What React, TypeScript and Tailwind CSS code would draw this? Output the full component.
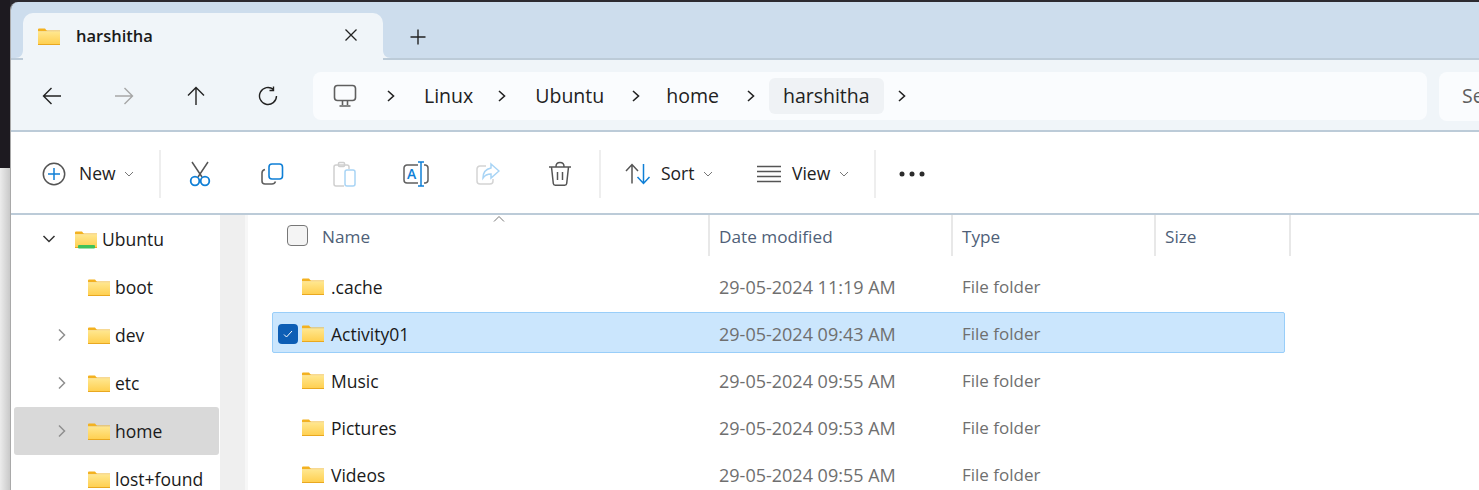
import React from "react";

const FONT = "font-['Open_Sans','Noto_Sans',sans-serif]";

const Folder = ({ drive = false }: { drive?: boolean }) => (
    <svg width="24" height="19" viewBox="0 0 24 19" className="shrink-0">
        <defs>
            <linearGradient id="folderBody" x1="0" y1="0" x2="0" y2="1">
                <stop offset="0" stopColor="#ffe78f" />
                <stop offset="1" stopColor="#ffcf4f" />
            </linearGradient>
        </defs>
        <path d="M1 2.500a1 1 0 0 1 1-1h6l2 2.500h-9z" fill="#f4b11f" />
        <rect x="1" y="3.500" width="22" height="1" fill="#f0b429" />
        <rect x="1" y="4.500" width="22" height="13" fill="url(#folderBody)" />
        <rect x="1" y="17" width="22" height="1" fill="#e9a820" />
        {drive && <rect x="4" y="15" width="17" height="3.500" rx="1" fill="#3fc25a" />}
    </svg>
);

const Chevron = ({ open = false }: { open?: boolean }) => (
    <svg width="16" height="16" viewBox="0 0 16 16" fill="none" stroke={open ? "#333" : "#8f8f8f"} strokeWidth="1.5">
        {open ? <path d="M2.500 5l5.500 5.500L13.500 5" /> : <path d="M5 2.500l5.500 5.500L5 13.500" />}
    </svg>
);

const Crumb = () => (
    <svg width="12" height="14" viewBox="0 0 12 14" fill="none" stroke="#222" strokeWidth="1.6" className="shrink-0">
        <path d="M3 2l5.500 5L3 12" />
    </svg>
);

const Caret = () => (
    <svg width="10" height="6" viewBox="0 0 10 6" fill="none" stroke="#777" strokeWidth="1">
        <path d="M1 1l4 4 4-4" />
    </svg>
);

const Sep = () => <div className="w-[2px] h-[48px] bg-[#eeeeee] shrink-0" />;

const ArrowIcon = ({ d, stroke = "#222" }: { d: string; stroke?: string }) => (
    <svg width="20" height="20" viewBox="0 0 20 20" fill="none" stroke={stroke} strokeWidth="1.4">
        <path d={d} />
    </svg>
);

const CutIcon = () => (
    <svg width="24" height="26" viewBox="0 0 24 26" fill="none" strokeWidth="1.5">
        <path d="M4 1l10 15M20 1L10 16" stroke="#555" />
        <circle cx="7" cy="20" r="4.300" stroke="#0f7fd6" strokeWidth="1.8" />
        <circle cx="17" cy="20" r="4.300" stroke="#0f7fd6" strokeWidth="1.8" />
    </svg>
);

const CopyIcon = () => (
    <svg width="24" height="24" viewBox="0 0 24 24" fill="none" strokeWidth="1.6">
        <path d="M5 7.500C3 8 2 9 2 11v8c0 2 1.500 3 3 3h7c2 0 3-1 3.500-2.500" stroke="#5f5f5f" />
        <rect x="9" y="2" width="13.500" height="15" rx="3" stroke="#0f7fd6" />
    </svg>
);

const PasteIcon = () => (
    <svg width="24" height="26" viewBox="0 0 24 26" fill="none" strokeWidth="1.5">
        <path d="M12 25H4a2 2 0 0 1-2-2V6a2 2 0 0 1 2-2h11a2 2 0 0 1 2 2v2" stroke="#cfcfcf" />
        <rect x="6.500" y="1.500" width="6" height="4" rx="1" stroke="#cfcfcf" />
        <rect x="13" y="9" width="10" height="16" rx="2" stroke="#a8d4f5" />
    </svg>
);

const RenameIcon = () => (
    <svg width="26" height="26" viewBox="0 0 26 26" fill="none" strokeWidth="1.5">
        <path d="M15 4H4a3 3 0 0 0-3 3v12a3 3 0 0 0 3 3h11M21 4h1.500a3 3 0 0 1 2.500 3v12a3 3 0 0 1-2.500 3H21" stroke="#5f5f5f" />
        <path d="M18 1v24M15 1h6M15 25h6" stroke="#0f7fd6" />
        <text x="4" y="18" fontSize="14" fontFamily="Open Sans, sans-serif" fill="#0f7fd6" stroke="none" fontWeight="600">A</text>
    </svg>
);

const ShareIcon = () => (
    <svg width="24" height="24" viewBox="0 0 24 24" fill="none" strokeWidth="1.5">
        <path d="M10 4H4a3 3 0 0 0-3 3v12a3 3 0 0 0 3 3h10a3 3 0 0 0 3-3v-2" stroke="#d4d4d4" />
        <path d="M15 2l8 7-8 7v-4c-4 0-6 1-8 4 0-6 3-9 8-10z" stroke="#a8d4f5" />
    </svg>
);

const TrashIcon = () => (
    <svg width="24" height="26" viewBox="0 0 24 26" fill="none" stroke="#555" strokeWidth="1.5">
        <path d="M1 6h22M8 5.500C8 3 9.500 1.500 12 1.500S16 3 16 5.500M3.500 6l1.800 16.500a2 2 0 0 0 2 1.800h9.400a2 2 0 0 0 2-1.800L20.500 6M9.500 11v8M14.500 11v8" />
    </svg>
);

const SortIcon = () => (
    <svg width="26" height="22" viewBox="0 0 26 22" fill="none" strokeWidth="1.5">
        <path d="M7 20.500V1.500M1 8l6-6.500L13 8" stroke="#555" />
        <path d="M18.500 1v19M12.500 14l6 6.500 6-6.500" stroke="#0f7fd6" />
    </svg>
);

const ViewIcon = () => (
    <svg width="24" height="18" viewBox="0 0 24 18" fill="none" stroke="#555" strokeWidth="1.3">
        <path d="M0 1.500h24M0 6.500h24M0 11.500h24M0 16.500h24" />
    </svg>
);

const tools = [CutIcon, CopyIcon, PasteIcon, RenameIcon, ShareIcon, TrashIcon];

const tree = [
    { name: "Ubuntu", indent: "pl-[27px]", chev: "open", drive: true },
    { name: "boot", indent: "pl-[73px]", chev: "" },
    { name: "dev", indent: "pl-[73px]", chev: "closed" },
    { name: "etc", indent: "pl-[73px]", chev: "closed" },
    { name: "home", indent: "pl-[73px]", chev: "closed", selected: true },
    { name: "lost+found", indent: "pl-[73px]", chev: "" },
];

const files = [
    { name: ".cache", date: "29-05-2024 11:19 AM" },
    { name: "Activity01", date: "29-05-2024 09:43 AM", selected: true },
    { name: "Music", date: "29-05-2024 09:55 AM" },
    { name: "Pictures", date: "29-05-2024 09:53 AM" },
    { name: "Videos", date: "29-05-2024 09:55 AM" },
];

export default function App() {
    return (
        <div className={`w-[1479px] h-[490px] overflow-hidden flex bg-[#2c2a30] ${FONT}`}>
            {/* desktop peeking out on the left */}
            <div className="w-[10px] shrink-0 flex flex-col">
                <div className="h-[168px] bg-[#1d1a20]" />
                <div className="flex-1 bg-gradient-to-r from-[#ececec] to-[#c9c9c9]" />
            </div>
            <div className="flex-1 min-w-0 mt-[2px] flex flex-col rounded-tl-lg overflow-hidden border-l border-[#a9a9a9]">
                {/* tab strip */}
                <div className="h-[58px] bg-[#cddded] border-b-2 border-[#bccbd8] flex items-end pl-[12px] shrink-0">
                    <div className="relative w-[360px] h-[47px] -mb-[2px] bg-[#f0f5f9] rounded-t-[10px] flex items-center pl-[14px] pr-[26px]">
                        <svg width="8" height="8" viewBox="0 0 8 8" fill="#f0f5f9" className="absolute -left-[8px] bottom-[2px]">
                            <path d="M8 0v8H0c5 0 8-3 8-8z" />
                        </svg>
                        <svg width="8" height="8" viewBox="0 0 8 8" fill="#f0f5f9" className="absolute -right-[8px] bottom-[2px]">
                            <path d="M0 0v8h8C3 8 0 5 0 0z" />
                        </svg>
                        <Folder />
                        <span className="ml-[15px] text-[16.500px] font-semibold text-[#1a1a1a] flex-1">harshitha</span>
                        <svg width="12" height="12" viewBox="0 0 12 12" stroke="#222" strokeWidth="1.3" className="mb-[3px]">
                            <path d="M0.500 0.500l11 11M11.500 0.500l-11 11" />
                        </svg>
                    </div>
                    <svg width="16" height="16" viewBox="0 0 16 16" stroke="#222" strokeWidth="1.4" className="ml-[27px] mb-[13px]">
                        <path d="M8 0.500v15M0.500 8h15" />
                    </svg>
                </div>
                {/* navigation row */}
                <div className="h-[72px] pt-[2px] bg-[#f0f5f9] border-b-2 border-[#bccbd8] flex items-center shrink-0">
                    <div className="w-[302px] flex shrink-0 pl-[31px] gap-[52px]">
                        <ArrowIcon d="M19 10H1.500M9.500 2l-8 8 8 8" />
                        <ArrowIcon d="M1 10h17.500M10.500 2l8 8-8 8" stroke="#a6a6a6" />
                        <ArrowIcon d="M10 19V1.500M2 9.500l8-8 8 8" />
                        <ArrowIcon d="M15.500 3.500A8.500 8.500 0 1 0 18.500 10M15.500 0.500v4h-4" />
                    </div>
                    <div className="w-[1114px] h-[48px] bg-[#fafcfe] rounded-lg flex items-center shrink-0 text-[19.500px] text-[#222]">
                        <svg width="24" height="24" viewBox="0 0 24 24" fill="none" stroke="#5f5f5f" strokeWidth="1.6" className="ml-[20px]">
                            <rect x="1.500" y="1.500" width="21" height="15" rx="3" />
                            <path d="M9.500 17v4M14.500 17v4M6.500 22h11" />
                        </svg>
                        <div className="ml-[28px]"><Crumb /></div>
                        <span className="ml-[27px]">Linux</span>
                        <div className="ml-[23px]"><Crumb /></div>
                        <span className="ml-[27px]">Ubuntu</span>
                        <div className="ml-[26px]"><Crumb /></div>
                        <span className="ml-[24px]">home</span>
                        <div className="ml-[26px]"><Crumb /></div>
                        <span className="ml-[12px] h-[36px] px-[14px] bg-[#eff2f5] rounded-md flex items-center">harshitha</span>
                        <div className="ml-[12px]"><Crumb /></div>
                    </div>
                    <div className="ml-[12px] flex-1 h-[49px] bg-[#fafcfe] rounded-l-lg flex items-center pl-[23px] text-[19.500px] text-[#5f5f5f] overflow-hidden">
                        Search
                    </div>
                </div>
                {/* command bar */}
                <div className="h-[83px] pt-[2px] bg-white border-b-2 border-[#bccbd8] flex items-center shrink-0 text-[17.500px] text-[#222]">
                    <svg width="24" height="24" viewBox="0 0 24 24" fill="none" className="ml-[31px] shrink-0">
                        <circle cx="12" cy="12" r="10.700" stroke="#555" strokeWidth="1.500" />
                        <path d="M12 6v12M6 12h12" stroke="#0f7fd6" strokeWidth="1.500" />
                    </svg>
                    <span className="ml-[13px] w-[45px]">New</span>
                    <Caret />
                    <div className="ml-[25px]"><Sep /></div>
                    <div className="flex shrink-0 ml-[3px]">
                        {tools.map((Icon, i) => (
                            <div key={i} className="w-[72px] flex justify-center items-center"><Icon /></div>
                        ))}
                    </div>
                    <div className="ml-[3px]"><Sep /></div>
                    <div className="ml-[24px]"><SortIcon /></div>
                    <span className="ml-[10px] w-[42px]">Sort</span>
                    <Caret />
                    <div className="ml-[44px]"><ViewIcon /></div>
                    <span className="ml-[11px] w-[47px]">View</span>
                    <Caret />
                    <div className="ml-[25px]"><Sep /></div>
                    <svg width="26" height="6" viewBox="0 0 26 6" fill="#2b2b2b" className="ml-[23px]">
                        <circle cx="3" cy="3" r="2.500" />
                        <circle cx="13" cy="3" r="2.500" />
                        <circle cx="23" cy="3" r="2.500" />
                    </svg>
                </div>
                {/* body */}
                <div className="flex-1 min-h-0 flex bg-white">
                    <div className="w-[209px] shrink-0 pl-[3px] pr-[1px] text-[17.500px] text-[#1a1a1a]">
                        {tree.map((row) => (
                            <div key={row.name} className={`relative h-[48px] flex items-center gap-[4px] rounded-[3px] ${row.indent} ${row.selected ? "bg-[#d9d9d9]" : ""}`}>
                                {row.chev && (
                                    <span className={`absolute top-[16px] ${row.chev === "open" ? "left-[27px]" : "left-[40px]"}`}>
                                        <Chevron open={row.chev === "open"} />
                                    </span>
                                )}
                                {row.drive && <span className="w-[29px] shrink-0" />}
                                <Folder drive={row.drive} />
                                <span>{row.name}</span>
                            </div>
                        ))}
                    </div>
                    <div className="w-[25px] bg-[#efefef] shrink-0" />
                    <div className="w-[3px] shrink-0 bg-[#f7f7f7]" />
                    <div className="flex-1 min-w-0 relative text-[17.200px]">
                        <svg width="12" height="6" viewBox="0 0 12 6" fill="none" stroke="#777" className="absolute left-[245px] top-[1px]">
                            <path d="M1 5.500l5-5 5 5" />
                        </svg>
                        <div className="h-[41px] flex text-[#4f5f78]">
                            <div className="w-[462px] flex items-center pl-[39px] border-r-2 border-[#e8e8e8] shrink-0">
                                <div className="w-[21px] h-[21px] rounded-[4px] border border-[#777] bg-[#f4f4f4] mr-[14px]" />
                                <span className="pt-[2px]">Name</span>
                            </div>
                            <div className="w-[243px] flex items-center pl-[9px] pt-[2px] border-r-2 border-[#e8e8e8] shrink-0">Date modified</div>
                            <div className="w-[203px] flex items-center pl-[9px] pt-[2px] border-r-2 border-[#e8e8e8] shrink-0">Type</div>
                            <div className="w-[135px] flex items-center pl-[9px] pt-[2px] border-r-2 border-[#e8e8e8] shrink-0">Size</div>
                        </div>
                        <div className="mt-[9px] flex flex-col gap-[6px] pl-[24px]">
                            {files.map((f) => (
                                <div key={f.name} className={`w-[1013px] h-[41px] shrink-0 flex items-center rounded-[2px] border ${f.selected ? "bg-[#cbe6fd] border-[#99cef9]" : "border-transparent"}`}>
                                    <div className="w-[28px] pt-[2px] shrink-0 flex justify-center">
                                        {f.selected && (
                                            <div className="w-[20px] h-[20px] ml-[2px] rounded-[4px] bg-[#0d5eb5] flex items-center justify-center">
                                                <svg width="10" height="8" viewBox="0 0 10 8" fill="none" stroke="#fff" strokeWidth="1">
                                                    <path d="M1 4.500l2.500 2.500L9 1" />
                                                </svg>
                                            </div>
                                        )}
                                    </div>
                                    <div className="pt-[2px]"><Folder /></div>
                                    <span className="ml-[6px] pt-[4px] w-[388px] shrink-0 text-[#1a1a1a] text-[17.500px]">{f.name}</span>
                                    <span className="pt-[4px] w-[243px] shrink-0 text-[#6f6f6f] text-[18px]">{f.date}</span>
                                    <span className="pt-[3px] text-[#6f6f6f] text-[17px]">File folder</span>
                                </div>
                            ))}
                        </div>
                    </div>
                </div>
            </div>
        </div>
    );
}
